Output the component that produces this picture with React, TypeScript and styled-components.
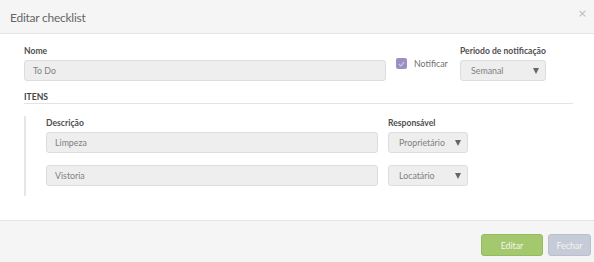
import styled, { createGlobalStyle } from "styled-components";

const GlobalStyle = createGlobalStyle`
  body {
    margin: 0;
    font-family: Lato, "Open Sans", sans-serif;
    background: #fff;
  }
`;

type Item = { descricao: string; responsavel: string };

const items: Item[] = [
  { descricao: "Limpeza", responsavel: "Proprietário" },
  { descricao: "Vistoria", responsavel: "Locatário" },
];

const Arrow = () => (
  <svg width="6" height="6" viewBox="0 0 6 6">
    <path d="M0 0 H6 L3 6 Z" fill="#666" />
  </svg>
);

const App = () => {
  return (
    <Modal>
      <GlobalStyle />
      <Header>
        <Title>Editar checklist</Title>
        <Close>×</Close>
      </Header>
      <Body>
        <TopRow>
          <Field width={362}>
            <Label>Nome</Label>
            <Input>To Do</Input>
          </Field>
          <CheckWrap>
            <Check>
              <svg width="7" height="6" viewBox="0 0 7 6">
                <path d="M0.8 3 L2.8 5 L6.2 1" stroke="#c9c0e0" strokeWidth="1.2" fill="none" />
              </svg>
            </Check>
            <CheckLabel>Notificar</CheckLabel>
          </CheckWrap>
          <Field width={86}>
            <Label>Periodo de notificação</Label>
            <Select>
              Semanal
              <Arrow />
            </Select>
          </Field>
        </TopRow>
        <SectionTitle>ITENS</SectionTitle>
        <ItemList>
          {items.map((item, i) => (
            <ItemRow key={item.descricao}>
              <Field width={332}>
                {i === 0 && <Label>Descrição</Label>}
                <Input>{item.descricao}</Input>
              </Field>
              <Field width={80}>
                {i === 0 && <Label>Responsável</Label>}
                <Select>
                  {item.responsavel}
                  <Arrow />
                </Select>
              </Field>
            </ItemRow>
          ))}
        </ItemList>
      </Body>
      <Footer>
        <Button variant="primary">Editar</Button>
        <Button variant="default">Fechar</Button>
      </Footer>
    </Modal>
  );
};

const Modal = styled.div`
  width: 594px;
  height: 262px;
  display: flex;
  flex-direction: column;
  background: #fff;
  overflow: hidden;
`;

const Header = styled.div`
  height: 33px;
  flex-shrink: 0;
  background: #f5f5f5;
  border-bottom: 1px solid #e3e3e3;
  display: flex;
  align-items: center;
  justify-content: space-between;
  padding: 0 7px 0 10px;
`;

const Title = styled.div`
  font-size: 12px;
  letter-spacing: -0.25px;
  color: #666;
  margin-top: 1px;
`;

const Close = styled.div`
  font-family: "DejaVu Sans", sans-serif;
  font-size: 11px;
  color: #bbb;
  margin-top: -6px;
`;

const Body = styled.div`
  flex: 1;
  padding: 10px 21px 0 24px;
`;

const TopRow = styled.div`
  display: flex;
  align-items: flex-end;
`;

const Field = styled.div<{ width: number }>`
  width: ${(p) => p.width}px;
  flex-shrink: 0;
  display: flex;
  flex-direction: column;
`;

const Label = styled.div`
  font-size: 8.6px;
  font-weight: 700;
  color: #4f4f4f;
  line-height: 14px;
  margin-bottom: 2px;
  white-space: nowrap;
`;

const Input = styled.div`
  height: 21px;
  box-sizing: border-box;
  background: #eee;
  border: 1px solid #ddd;
  border-radius: 3px;
  padding: 0 8px;
  display: flex;
  align-items: center;
  font-size: 8.8px;
  color: #808080;
`;

const Select = styled(Input)`
  justify-content: space-between;
  padding: 0 6px 0 10px;
`;

const CheckWrap = styled.div`
  width: 74px;
  flex-shrink: 0;
  display: flex;
  align-items: center;
  gap: 7px;
  padding-left: 10px;
  height: 32px;
  padding-bottom: 3px;
  box-sizing: border-box;
`;

const Check = styled.div`
  width: 11px;
  height: 11px;
  border-radius: 2px;
  background: #9c8fc4;
  display: flex;
  align-items: center;
  justify-content: center;
`;

const CheckLabel = styled.div`
  font-size: 8.8px;
  color: #707070;
`;

const SectionTitle = styled.div`
  margin-top: 10px;
  font-size: 8.6px;
  font-weight: 700;
  color: #444;
  line-height: 12px;
  border-bottom: 1px solid #e3e3e3;
`;

const ItemList = styled.div`
  margin-top: 12px;
  border-left: 2px solid #e6e6e6;
  padding: 0 0 10px 20px;
  display: flex;
  flex-direction: column;
  gap: 12px;
`;

const ItemRow = styled.div`
  display: flex;
  align-items: flex-end;
  gap: 10px;
`;

const Footer = styled.div`
  height: 42px;
  flex-shrink: 0;
  background: #f5f5f5;
  border-top: 1px solid #e3e3e3;
  display: flex;
  align-items: flex-start;
  justify-content: flex-end;
  gap: 5px;
  padding: 13px 3px 0 0;
  box-sizing: border-box;
`;

const Button = styled.div<{ variant: "primary" | "default" }>`
  height: 22px;
  width: ${(p) => (p.variant === "primary" ? "62px" : "43px")};
  box-sizing: border-box;
  border-radius: 3px;
  display: flex;
  align-items: center;
  justify-content: center;
  font-size: 8.8px;
  color: #f4f6ee;
  background: ${(p) => (p.variant === "primary" ? "#a3c86d" : "#c6cbd8")};
  border: 1px solid ${(p) => (p.variant === "primary" ? "#95bb5f" : "#b9bfcd")};
`;

export default App;
